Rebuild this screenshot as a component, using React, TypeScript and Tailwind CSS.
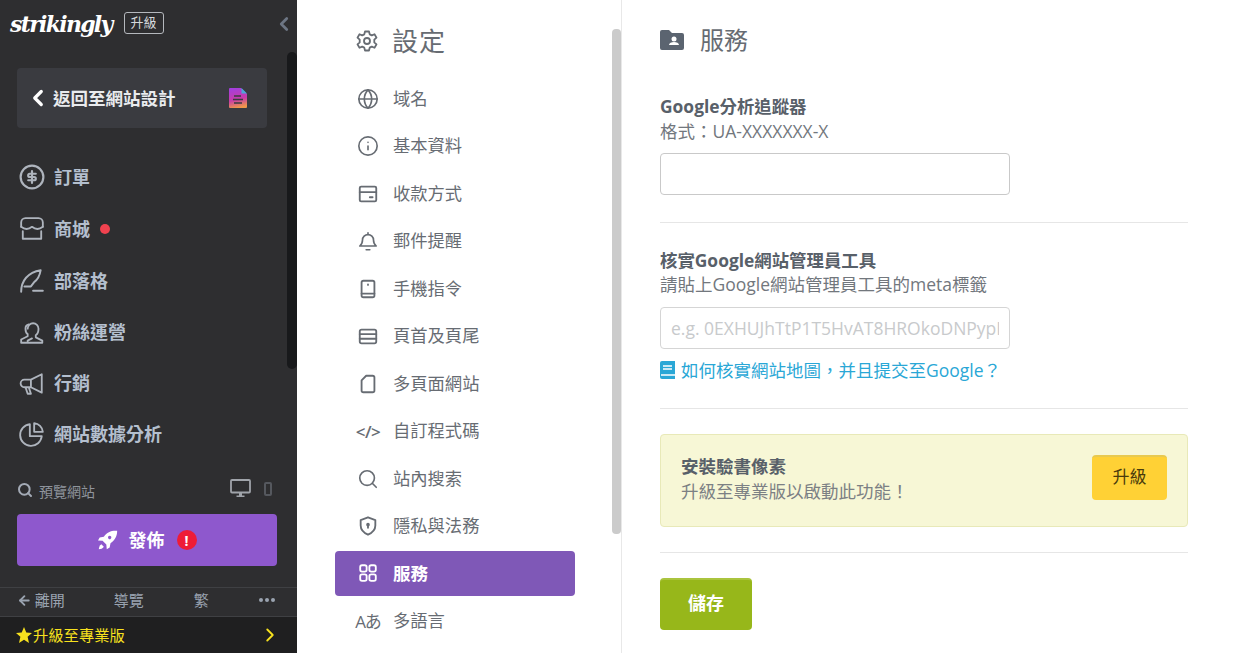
import { ChevronLeft, ChevronRight, ArrowLeft, Search, Globe, Info } from 'lucide-react'
import type { ReactNode } from 'react'

const font = "font-['Open_Sans','Noto_Sans_CJK_TC',sans-serif]"

const Ico = ({ children, size = 24, className = '' }: { children: ReactNode; size?: number; className?: string }) => (
  <svg
    width={size}
    height={size}
    viewBox="0 0 24 24"
    fill="none"
    stroke="currentColor"
    strokeWidth={2}
    strokeLinecap="round"
    strokeLinejoin="round"
    className={className}>
    {children}
  </svg>
)

const sideItems: { label: string; icon: ReactNode; dot?: boolean; h: string }[] = [
  {
    label: '訂單',
    h: 'h-[52px]',
    icon: (
      <Ico size={26} className="text-[#aeb4bd]">
        <circle cx="12" cy="12" r="10.5" />
        <path d="M15.5 9H10a1.500 1.500 0 0 0 0 3h4a1.500 1.500 0 0 1 0 3H8.500M12 6.500v11" />
      </Ico>
    )
  },
  {
    label: '商城',
    dot: true,
    h: 'h-[52px]',
    icon: (
      <Ico size={26} className="text-[#aeb4bd]">
        <path d="M2 10V6a4 4 0 0 1 4-4h12a4 4 0 0 1 4 4v4" strokeWidth={1.700} />
        <path d="M2 10q5 4 10 0q5 4 10 0" strokeWidth={1.700} />
        <path d="M3.500 14v7h17v-7" strokeWidth={1.700} />
      </Ico>
    )
  },
  {
    label: '部落格',
    h: 'h-[52px]',
    icon: (
      <Ico size={26} className="text-[#aeb4bd]">
        <path d="M2 22C2 12 8 4 20 2c-1 6-3 9-6 11l-3 4H5M13 21h9" strokeWidth={1.800} />
      </Ico>
    )
  },
  {
    label: '粉絲運營',
    h: 'h-[51px]',
    icon: (
      <Ico size={26} className="text-[#aeb4bd]">
        <path d="M8 8a5 5 0 0 1 10 0c0 3-1 5-2.500 6v2l6 3v2H8v-2l4-2" strokeWidth={1.700} />
        <path d="M9 4a4 4 0 0 0-3 4c0 2 .5 4 2 5v2l-6 3v3h5" strokeWidth={1.700} />
      </Ico>
    )
  },
  {
    label: '行銷',
    h: 'h-[51px]',
    icon: (
      <Ico size={26} className="text-[#aeb4bd]">
        <path d="M21 3v17L11 15H5a3 3 0 0 1 0-7h6zM11 8v7M6 15l2 6h3l-2-6" strokeWidth={1.700} />
      </Ico>
    )
  },
  {
    label: '網站數據分析',
    h: 'h-[50px]',
    icon: (
      <Ico size={26} className="text-[#aeb4bd]">
        <path d="M10 3a10 10 0 1 0 11 11H10z" strokeWidth={1.700} />
        <path d="M14 2a9 9 0 0 1 8 8h-8z" strokeWidth={1.700} />
      </Ico>
    )
  }
]

const navItems: { label: string; icon: ReactNode; active?: boolean }[] = [
  { label: '域名', icon: <Globe size={22} strokeWidth={1.800} /> },
  { label: '基本資料', icon: <Info size={22} strokeWidth={1.800} /> },
  {
    label: '收款方式',
    icon: (
      <Ico size={22}>
        <rect x="3" y="4" width="18" height="16" rx="1.500" />
        <path d="M3 10h18M14 15.500h3" />
      </Ico>
    )
  },
  {
    label: '郵件提醒',
    icon: (
      <Ico size={22}>
        <path d="M3 17.500h18c-2-1.500-3-3-3-6.500a6 6 0 0 0-12 0c0 3.500-1 5-3 6.500zM10 21.500h4M12 3v2" strokeWidth={1.800} />
      </Ico>
    )
  },
  {
    label: '手機指令',
    icon: (
      <Ico size={22}>
        <rect x="5" y="3" width="14" height="18" rx="2" />
        <path d="M5 17h14M12 7v.5" />
      </Ico>
    )
  },
  {
    label: '頁首及頁尾',
    icon: (
      <Ico size={22}>
        <rect x="3" y="5" width="18" height="15" rx="2" />
        <path d="M3 10h18M3 15h18" />
      </Ico>
    )
  },
  {
    label: '多頁面網站',
    icon: (
      <Ico size={22}>
        <path d="M10 3h7a2 2 0 0 1 2 2v14a2 2 0 0 1-2 2H7a2 2 0 0 1-2-2V8z" />
      </Ico>
    )
  },
  { label: '自訂程式碼', icon: <span className="text-[17px] leading-none font-semibold tracking-[-0.5px] whitespace-nowrap">{'</>'}</span> },
  { label: '站內搜索', icon: <Search size={22} strokeWidth={1.800} /> },
  {
    label: '隱私與法務',
    icon: (
      <Ico size={22}>
        <path d="M12 2.500l8 3v6c0 5-3.500 8-8 10-4.500-2-8-5-8-10v-6z" />
        <circle cx="12" cy="10.500" r="1" />
        <path d="M12 11v3" />
      </Ico>
    )
  },
  {
    label: '服務',
    active: true,
    icon: (
      <Ico size={22}>
        <rect x="3.500" y="3.500" width="7" height="7" rx="2" />
        <rect x="13.500" y="3.500" width="7" height="7" rx="2" />
        <rect x="3.500" y="13.500" width="7" height="7" rx="2" />
        <rect x="13.500" y="13.500" width="7" height="7" rx="2" />
      </Ico>
    )
  },
  { label: '多語言', icon: <span className="text-[17px] leading-none tracking-[-1px] whitespace-nowrap">Aあ</span> }
]

const Sidebar = () => (
  <aside className="relative flex h-[653px] w-[297px] shrink-0 flex-col bg-[#2e2e30]">
    <div className="flex h-[68px] items-start pt-[9px] pl-[10px]">
      <span className="font-['DejaVu_Serif',serif] text-[22px] leading-[30px] font-bold tracking-[-1.700px] text-white italic">
        strikingly
      </span>
      <span className="mt-[3px] ml-[12px] flex h-[22px] w-[40px] items-center justify-center rounded-[3px] border border-[#b5b8bd] text-[13px] text-[#d5d8dc]">
        升級
      </span>
      <ChevronLeft size={22} strokeWidth={3} className="mt-[4px] mr-[2px] ml-auto text-[#6d7684]" />
    </div>

    <div className="mx-[17px] flex h-[60px] w-[250px] items-center rounded-[4px] bg-[#3a3b40] pr-[20px] pl-[8px]">
      <ChevronLeft size={26} strokeWidth={3} className="text-white" />
      <span className="ml-[2px] text-[17.500px] font-bold text-[#e9ebee]">返回至網站設計</span>
      <svg width="18" height="20" viewBox="0 0 18 20" className="ml-auto">
        <defs>
          <linearGradient id="doc" x1="0.200" y1="0" x2="0.400" y2="1">
            <stop offset="0" stopColor="#a23fe0" />
            <stop offset="0.600" stopColor="#c83ca8" />
            <stop offset="1" stopColor="#f0964a" />
          </linearGradient>
        </defs>
        <path d="M1 0h11l6 6v13a1 1 0 0 1-1 1H1a1 1 0 0 1-1-1V1a1 1 0 0 1 1-1z" fill="url(#doc)" />
        <path d="M12.500 0L18 5.500h-5.500z" fill="#4ba8d8" />
        <path d="M5 8h7M4 11.500h10M5 15h8" stroke="#3a3b40" strokeWidth="1.600" />
      </svg>
    </div>

    <div className="mt-[23px] flex flex-col">
      {sideItems.map(item => (
        <div key={item.label} className={`flex items-center pl-[19px] ${item.h}`}>
          <span className="flex w-[26px] justify-center">{item.icon}</span>
          <span className="ml-[9px] text-[18px] font-bold text-[#b4bfce]">{item.label}</span>
          {item.dot && <span className="ml-[10px] h-[10px] w-[10px] rounded-full bg-[#f0424f]" />}
        </div>
      ))}
    </div>

    <div className="mt-[17px] flex h-[30px] items-center pr-[25px] pl-[17px]">
      <Search size={16} strokeWidth={3} className="mb-[2px] text-[#a3aab5]" />
      <span className="ml-[6px] text-[14px] text-[#8f949c]">預覽網站</span>
      <svg width="21" height="19" viewBox="0 0 21 19" className="mb-[6px] ml-auto text-[#a0a4aa]">
        <rect x="1" y="1" width="19" height="12.500" rx="1" fill="none" stroke="currentColor" strokeWidth="1.800" />
        <path d="M9 14h3v2.500h2.500V18h-8v-1.500H9z" fill="currentColor" />
      </svg>
      <span className="mb-[5px] ml-[13px] h-[14px] w-[8px] rounded-[2px] border-2 border-[#55585e]" />
    </div>

    <div className="mx-[17px] mt-[8px] flex h-[52px] w-[260px] items-center justify-center rounded-[4px] bg-[#8e58cd]">
      <svg width="20" height="20" viewBox="0 0 24 24" fill="white">
        <path d="M23 1c-7-.5-12 1.500-16 7l-5 1-2 3.500 5.500.5 4.500 4.500.5 5.500 3.500-2 1-5c5.500-4 8-8.500 8-15zm-7 8a2 2 0 1 1 0-.01z" fillRule="evenodd" />
        <path d="M4 17c-2 1-3 4-3 6 2 0 5-1 6-3z" />
      </svg>
      <span className="ml-[11px] text-[18px] font-bold text-white">發佈</span>
      <span className="ml-[12px] flex h-[20px] w-[20px] items-center justify-center rounded-full bg-[#ee1c37] text-[14px] font-bold text-white">
        !
      </span>
    </div>

    <div className="mt-[21px] flex h-[30px] items-center border-t border-b border-[#3f4043] pr-[22px] pb-[4px] pl-[17px] text-[15px] text-[#9aa3b0]">
      <ArrowLeft size={15} strokeWidth={3} />
      <span className="ml-[3px] w-[80px]">離開</span>
      <span className="w-[81px]">導覽</span>
      <span className="w-[66px]">繁</span>
      <span className="ml-auto flex gap-[2px]">
        <i className="h-[4px] w-[4px] rounded-full bg-[#9aa3b0]" />
        <i className="h-[4px] w-[4px] rounded-full bg-[#9aa3b0]" />
        <i className="h-[4px] w-[4px] rounded-full bg-[#9aa3b0]" />
      </span>
    </div>

    <div className="flex flex-1 items-center bg-[#1f1f20] pr-[16px] pl-[16px] text-[15.300px] text-[#f7e11e]">
      <svg width="16" height="16" viewBox="0 0 24 24" fill="currentColor">
        <path d="M12 0l3.400 8.400 8.600.6-6.600 5.800 2.100 9.200L12 19l-7.500 5 2.100-9.200L0 9l8.600-.6z" />
      </svg>
      <span className="ml-[1px]">升級至專業版</span>
      <ChevronRight size={22} strokeWidth={2} className="ml-auto" />
    </div>

    {/* scrollbar sits over the sidebar */}
    <div className="absolute top-[52px] right-0 h-[317px] w-[10px] rounded-[5px] bg-[#18191b]" />
  </aside>
)

const SettingsNav = () => (
  <nav className="relative flex h-[653px] w-[325px] shrink-0 flex-col border-r border-[#e8e8e8] pl-[38px] text-[#676c73]">
    <div className="mt-[22px] flex h-[38px] items-center">
      <svg width="24" height="24" viewBox="0 0 24 24" fill="none" stroke="currentColor" strokeWidth="1.800" strokeLinejoin="round" className="ml-[20px]">
        <path d="M10 2.500h4l.7 2.900 2.100 1 2.700-1.200 2 3.400-2.200 2v2.800l2.200 2-2 3.400-2.700-1.200-2.100 1-.7 2.900h-4l-.7-2.900-2.100-1-2.700 1.200-2-3.400 2.200-2v-2.800l-2.200-2 2-3.400 2.700 1.200 2.100-1z" />
        <circle cx="12" cy="12" r="3" />
      </svg>
      <span className="ml-[13px] text-[26px] tracking-[1px]">設定</span>
    </div>
    <div className="mt-[15px] flex flex-col">
      {navItems.map(item => (
        <div
          key={item.label}
          className={
            item.active
              ? 'my-[1.250px] flex h-[45px] w-[240px] items-center rounded-[4px] bg-[#7f58b7] pb-[1px] text-[17.500px] font-bold text-white'
              : 'flex h-[47.500px] w-[240px] items-center text-[17.300px]'
          }>
          <span className="flex w-[58px] justify-center pl-[8px]">{item.icon}</span>
          <span>{item.label}</span>
        </div>
      ))}
    </div>
    {/* settings list scrollbar */}
    <div className="absolute top-[29px] right-0 h-[505px] w-[9px] rounded-[4px] bg-[#cbcbcb]" />
  </nav>
)

const Services = () => (
  <main className="ml-[38px] w-[528px] text-[17.500px] text-[#72777d]">
    <div className="mt-[26px] flex h-[28px] items-center">
      <svg width="24" height="20" viewBox="0 0 24 20">
        <path d="M2 0h7l3 3h10a2 2 0 0 1 2 2v13a2 2 0 0 1-2 2H2a2 2 0 0 1-2-2V2a2 2 0 0 1 2-2z" fill="#5b6470" />
        <circle cx="14" cy="9" r="2.500" fill="white" />
        <path d="M9 15c0-2 2.500-3 5-3s5 1 5 3z" fill="white" />
      </svg>
      <span className="ml-[16px] text-[24px] text-[#676c73]">服務</span>
    </div>

    <p className="mt-[40px] text-[17.400px] leading-[24px] font-bold text-[#586069]">Google分析追蹤器</p>
    <p className="mt-[1px] leading-[24px]">格式：UA-XXXXXXX-X</p>
    <input className="mt-[10px] block h-[42px] w-[350px] rounded-[4px] border border-[#c9c9c9] bg-white px-[10px]" />
    <hr className="mt-[27px] border-[#e6e6e6]" />

    <p className="mt-[25px] text-[17.400px] leading-[24px] font-bold text-[#586069]">核實Google網站管理員工具</p>
    <p className="leading-[24px]">請貼上Google網站管理員工具的meta標籤</p>
    <input
      readOnly
      placeholder="e.g. 0EXHUJhTtP1T5HvAT8HROkoDNPypI"
      className="mt-[11px] block h-[42px] w-[350px] rounded-[4px] border border-[#d5d5d5] bg-white px-[10px] placeholder:text-[#c8cacc]"
    />
    <div className="mt-[9px] flex h-[24px] items-center text-[#2aa7d6]">
      <svg width="15" height="18" viewBox="0 0 15 18">
        <path d="M2 0h13v18H2a2 2 0 0 1-2-2V2a2 2 0 0 1 2-2z" fill="#2aa7d6" />
        <path d="M3 5h9M3 8h9M1 14h14" stroke="white" strokeWidth="1.500" />
      </svg>
      <span className="ml-[6px]">如何核實網站地圖，并且提交至Google？</span>
    </div>
    <hr className="mt-[26px] border-[#e6e6e6]" />

    <div className="mt-[25px] flex h-[93px] items-center justify-between rounded-[4px] border border-[#e8e9b8] bg-[#f7f7d6] pr-[20px] pl-[20px]">
      <div className="pb-[3px]">
        <p className="leading-[25px] font-bold text-[#586069]">安裝驗書像素</p>
        <p className="leading-[25px] text-[#7c8084]">升級至專業版以啟動此功能！</p>
      </div>
      <button className="mb-[6px] h-[45px] w-[75px] rounded-[4px] border-t-2 border-[#e8c94f] bg-[#ffd135] pb-[4px] text-[17px] text-[#4a3c0c]">
        升級
      </button>
    </div>
    <hr className="mt-[25px] border-[#e6e6e6]" />

    <button className="mt-[25px] h-[52px] w-[92px] rounded-[4px] border-t-2 border-[#aac43e] bg-[#97b71a] pb-[3px] text-[18px] font-bold text-white">
      儲存
    </button>
  </main>
)

const App = () => (
  <div className={`flex h-[653px] w-[1255px] overflow-hidden bg-white ${font}`}>
    <Sidebar />
    <SettingsNav />
    <Services />
  </div>
)

export default App
